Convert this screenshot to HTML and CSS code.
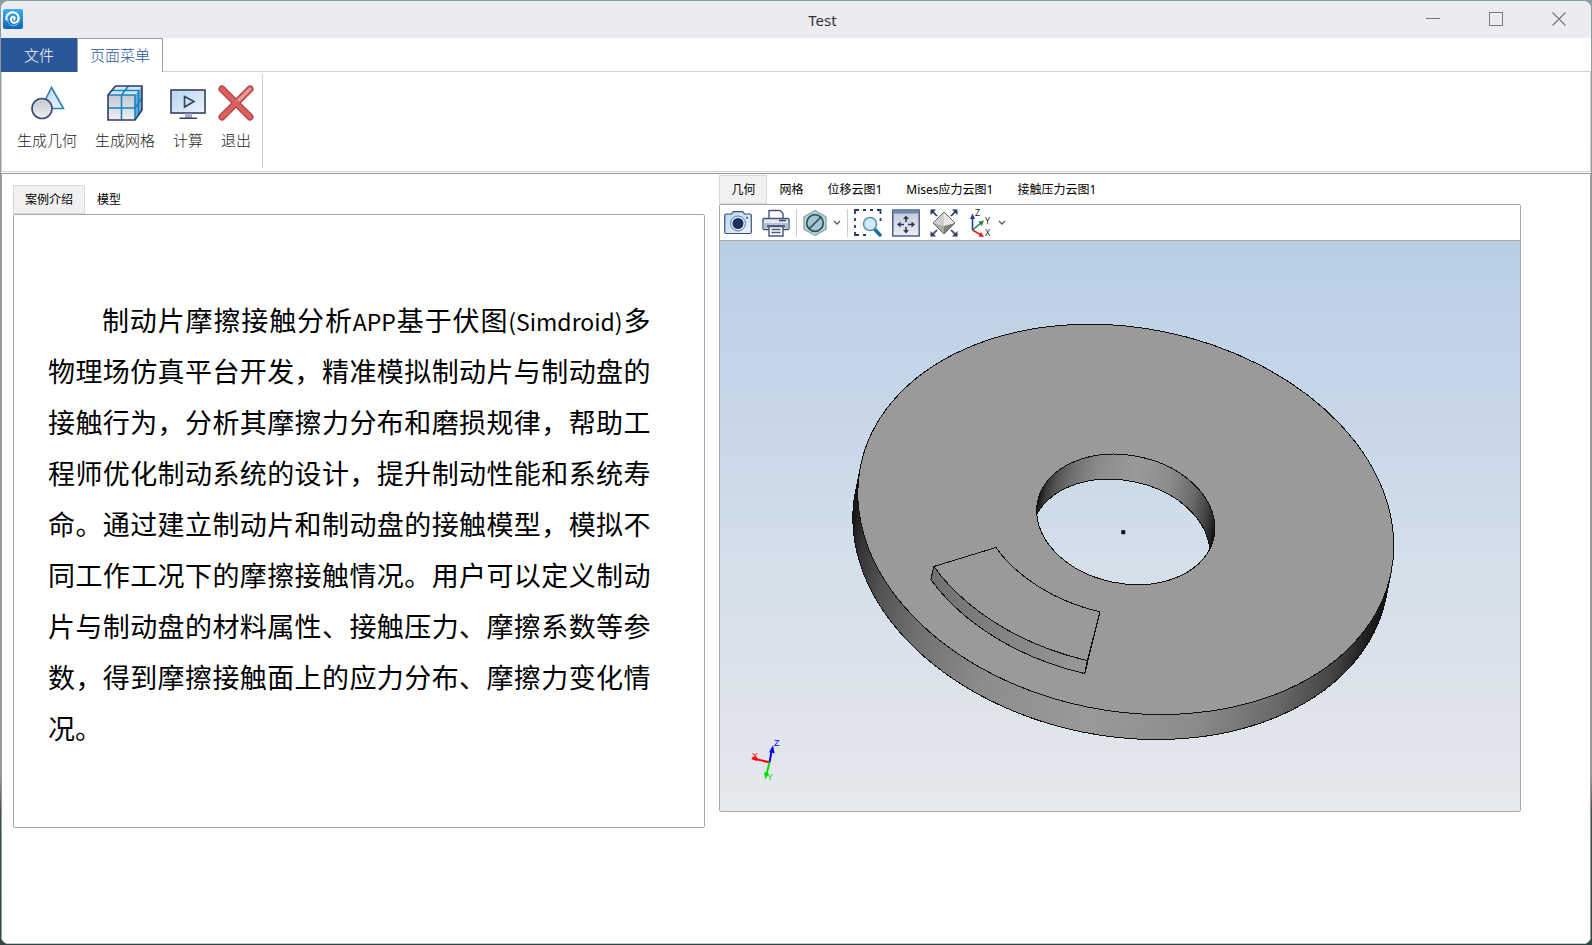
FILE: index.html
```html
<!DOCTYPE html>
<html lang="zh-CN">

<head>
  <meta charset="UTF-8">
  <meta name="viewport" content="width=device-width, initial-scale=1.0">
  <title>Test</title>
  <link rel="stylesheet" href="styles.css">
</head>

<body>
  <div class="window">
    <header class="title-bar">
      <div class="title-left">
        <svg class="app-icon" width="20" height="20" viewBox="0 0 20 20">
          <defs>
            <linearGradient id="appBlue" x1="0" y1="0" x2="0" y2="1">
              <stop offset="0" stop-color="#3fb0f0"/>
              <stop offset="1" stop-color="#1262b4"/>
            </linearGradient>
          </defs>
          <rect width="20" height="20" rx="2" fill="url(#appBlue)"/>
          <path d="M16.500 8C17.500 13 14 16.800 9.800 16.500C6 16.200 4.300 13 5 10" fill="none" stroke="#8ec4ec" stroke-width="1"/>
          <path d="M3.500 10.500C2.800 5.500 7 2.800 11 3.500C15 4.300 16.500 8 15 11.300C13.800 14 10.300 14.500 8.500 12.500C7 10.500 8 8 10 7.800C11.800 7.800 12.300 9.800 11 10.600" fill="none" stroke="#fff" stroke-width="2" stroke-linecap="round"/>
        </svg>
      </div>
      <h1 class="title">Test</h1>
      <div class="window-buttons">
        <button type="button" aria-label="最小化">
          <svg width="14" height="14" viewBox="0 0 14 14"><path d="M0 6.500H14" stroke="#777" fill="none"/></svg>
        </button>
        <button type="button" aria-label="最大化">
          <svg width="14" height="14" viewBox="0 0 14 14"><rect x=".5" y=".5" width="13" height="13" stroke="#777" fill="none"/></svg>
        </button>
        <button type="button" aria-label="关闭">
          <svg width="14" height="14" viewBox="0 0 14 14"><path d="M.5.5l13 13M13.500.5l-13 13" stroke="#777" stroke-width="1.200" fill="none"/></svg>
        </button>
      </div>
    </header>

    <nav class="menu-tabs">
      <button type="button" class="file-tab">文件</button>
      <button type="button" class="page-tab">页面菜单</button>
    </nav>

    <div class="ribbon">
      <div class="ribbon-group">
        <button type="button">
          <svg width="36" height="36" viewBox="0 0 36 36">
            <defs>
              <linearGradient id="lightBlue" x1="0" y1="0" x2="1" y2="1">
                <stop offset="0" stop-color="#b5d4f0"/>
                <stop offset="1" stop-color="#eff6fc"/>
              </linearGradient>
              <linearGradient id="silver" x1="0" y1="0" x2="0" y2="1">
                <stop offset="0" stop-color="#c3c8d2"/>
                <stop offset="1" stop-color="#eeeff2"/>
              </linearGradient>
            </defs>
            <path d="M22.500 2.500L34.500 23.500H12Z" fill="url(#lightBlue)" stroke="#2b83bd" stroke-width="1.600"/>
            <circle cx="13" cy="23.500" r="10" fill="url(#silver)" stroke="#3c4a70" stroke-width="1.600"/>
          </svg>
          <span>生成几何</span>
        </button>
        <button type="button">
          <svg width="36" height="36" viewBox="0 0 36 36">
            <path d="M1 10L8.500 1H35L28 10Z" fill="#d3e8f7"/>
            <path d="M1 10H28V35H1Z" fill="url(#silver)"/>
            <path d="M28 10L35 1V25L28 35Z" fill="#70acd8"/>
            <path d="M1 23H28L35 13M14.500 35V10L21.500 1M4.500 5.500H31.500V30M1 10H28V35" fill="none" stroke="#1683c5" stroke-width="1.600"/>
            <path d="M1 10L8.500 1H35V25L28 35H1Z" fill="none" stroke="#303b61" stroke-width="1.600"/>
          </svg>
          <span>生成网格</span>
        </button>
        <button type="button">
          <svg width="36" height="36" viewBox="0 0 36 36">
            <rect x="1" y="5" width="34" height="23" fill="url(#lightBlue)" stroke="#344064" stroke-width="1.600"/>
            <path d="M14.500 11.500L24 16.500L14.500 22Z" fill="#cfe2f4" stroke="#344064" stroke-width="1.600"/>
            <path d="M15 28.500H22V33H15Z" fill="#a9afbd"/>
            <path d="M9.500 33.200H27" stroke="#344064" stroke-width="1.600"/>
          </svg>
          <span>计算</span>
        </button>
        <button type="button">
          <svg width="36" height="36" viewBox="0 0 36 36">
            <path d="M4 4L32 32M32 4L4 32" stroke="#ac3739" stroke-width="7" stroke-linecap="round"/>
            <path d="M4 4L32 32M32 4L4 32" stroke="#d95f60" stroke-width="5" stroke-linecap="round"/>
            <path d="M21 15L32 4" stroke="#e79a9a" stroke-width="3" stroke-linecap="round"/>
          </svg>
          <span>退出</span>
        </button>
      </div>
    </div>

    <main class="workspace">
      <section class="intro">
        <div class="tabs" role="tablist">
          <button type="button" role="tab" aria-selected="true">案例介绍</button>
          <button type="button" role="tab" aria-selected="false">模型</button>
        </div>
        <article class="intro-panel">
          <p>制动片摩擦接触分析<span class="latin">APP</span>基于伏图<span class="latin">(Simdroid)</span>多物理场仿真平台开发，精准模拟制动片与制动盘的接触行为，分析其摩擦力分布和磨损规律，帮助工程师优化制动系统的设计，提升制动性能和系统寿命。通过建立制动片和制动盘的接触模型，模拟不同工作工况下的摩擦接触情况。用户可以定义制动片与制动盘的材料属性、接触压力、摩擦系数等参数，得到摩擦接触面上的应力分布、摩擦力变化情况。</p>
        </article>
      </section>

      <section class="viewer">
        <div class="tabs" role="tablist">
          <button type="button" role="tab" aria-selected="true">几何</button>
          <button type="button" role="tab" aria-selected="false">网格</button>
          <button type="button" role="tab" aria-selected="false">位移云图1</button>
          <button type="button" role="tab" aria-selected="false">Mises应力云图1</button>
          <button type="button" role="tab" aria-selected="false">接触压力云图1</button>
        </div>
        <div class="viewer-panel">
          <div class="toolbar">
            <button type="button" aria-label="截图">
              <svg width="28" height="28" viewBox="0 0 28 28">
                <path d="M.7 6.500Q.7 5 2.200 5H7.500L9.500 2.700H18.500L20.500 5H25.800Q27.300 5 27.300 6.500V23Q27.300 24.500 25.800 24.500H2.200Q.7 24.500 .7 23Z" fill="url(#lightBlue)" stroke="#3f4f78" stroke-width="1.200"/>
                <circle cx="14" cy="14.500" r="7.500" fill="#e3edf7" stroke="#60779c"/>
                <circle cx="14" cy="14.500" r="5.500" fill="#1b305f"/>
                <circle cx="23" cy="8.800" r="1" fill="#34466f"/>
              </svg>
            </button>
            <button type="button" aria-label="打印">
              <svg width="28" height="28" viewBox="0 0 28 28">
                <path d="M7 10V1.500H18L21 4.500V10" fill="#fff" stroke="#46557c" stroke-width="1.400"/>
                <rect x="1" y="9.500" width="26" height="11" rx="1" fill="#e4e7ef" stroke="#46557c" stroke-width="1.400"/>
                <path d="M1.500 14H26.500V20H1.500Z" fill="#b9c0d2"/>
                <path d="M17 11.500H24M5 17H23" stroke="#34466f" stroke-width="1.600"/>
                <path d="M7 17.500H21V27H7Z" fill="#fff" stroke="#46557c" stroke-width="1.400"/>
                <path d="M9.500 20.500H18.500M9.500 23.500H18.500" stroke="#46557c" stroke-width="1.600"/>
              </svg>
            </button>
            <span class="divider"></span>
            <button type="button" class="with-arrow" aria-label="显示模式">
              <svg width="24" height="28" viewBox="0 0 24 28">
                <path d="M12 1.500L23 8V20L12 26.500L1 20V8Z" fill="#c3d3d7" stroke="#8aa6af" stroke-width="1.400"/>
                <circle cx="12" cy="14" r="8.300" fill="#a6c3cf" stroke="#27555f" stroke-width="1.700"/>
                <path d="M6.500 19.500L17.500 8.500" stroke="#27555f" stroke-width="1.700"/>
              </svg>
              <svg class="arrow" width="8" height="6" viewBox="0 0 8 6"><path d="M1 1L4 4L7 1" fill="none" stroke="#44636b" stroke-width="1.300"/></svg>
            </button>
            <span class="divider"></span>
            <button type="button" aria-label="框选缩放">
              <svg width="28" height="28" viewBox="0 0 28 28">
                <path d="M1 5V1H5M9 1H12M16 1H19M23 1H26.500V5M26.500 9V12M1 9V12M1 16V19M1 23V26H5M9 26H12" fill="none" stroke="#263a69" stroke-width="1.800"/>
                <path d="M20.500 20L26 26" stroke="#146da9" stroke-width="3.400" stroke-linecap="round"/>
                <circle cx="16" cy="15" r="6.500" fill="#d4e9f7" stroke="#5e93b9" stroke-width="1.600"/>
              </svg>
            </button>
            <button type="button" aria-label="平移">
              <svg width="28" height="28" viewBox="0 0 28 28">
                <rect x=".8" y="1" width="26.400" height="26" fill="url(#silver)" stroke="#3d5580" stroke-width="1.400"/>
                <path d="M1 1H27V4.500H1Z" fill="#6888ae"/>
                <path d="M14 13V9M14 18V22M12 15.500H8M16 15.500H20" stroke="#263a69" stroke-width="1.600"/>
                <path d="M14 6.500L17 10H11ZM14 24.500L17 21H11ZM5 15.500L8.500 12.500V18.500ZM23 15.500L19.500 12.500V18.500Z" fill="#263a69"/>
              </svg>
            </button>
            <button type="button" aria-label="适应窗口">
              <svg width="28" height="28" viewBox="0 0 28 28">
                <path d="M14 3L25 14L14 25L3 14Z" fill="#e6e6e6"/>
                <path d="M14 3V17L3 14Z" fill="#d0d0d0"/>
                <path d="M3 14L14 17V25Z" fill="#aaa"/>
                <path d="M25 14L14 17V25Z" fill="#808080"/>
                <path d="M14 3L25 14L14 25L3 14Z" fill="none" stroke="#666"/>
                <path d="M7 7L2 2M21 7L26 2M7 21L2 26M21 21L26 26" stroke="#263a69" stroke-width="1.700"/>
                <path d="M.5.5H6L.5 6ZM27.500.5H22L27.500 6ZM.5 27.500H6L.5 22ZM27.500 27.500H22L27.500 22Z" fill="#263a69"/>
              </svg>
            </button>
            <button type="button" class="with-arrow" aria-label="视图方向">
              <svg width="24" height="34" viewBox="0 0 24 34">
                <path d="M4.500 24V10" stroke="#263f93" stroke-width="1.600"/>
                <path d="M4.500 7.500L7 13H2Z" fill="#263f93"/>
                <path d="M4.500 24L13 17" stroke="#208544" stroke-width="1.600"/>
                <path d="M16 14.500L13.800 20L10.300 15.800Z" fill="#208544"/>
                <path d="M4.500 24L13 29" stroke="#e11c22" stroke-width="1.600"/>
                <path d="M16 31L10.500 30.500L13 26Z" fill="#e11c22"/>
                <text class="axis-name" x="7" y="10">Z</text>
                <text class="axis-name" x="17" y="18">Y</text>
                <text class="axis-name" x="17" y="30">X</text>
              </svg>
              <svg class="arrow" width="8" height="6" viewBox="0 0 8 6"><path d="M1 1L4 4L7 1" fill="none" stroke="#44636b" stroke-width="1.300"/></svg>
            </button>
          </div>

          <svg class="scene" viewBox="720 241 799 570">
            <defs>
              <linearGradient id="side" x1="0" x2="1">
                <stop offset="0" stop-color="#111"/>
                <stop offset=".03" stop-color="#343434"/>
                <stop offset=".08" stop-color="#535353"/>
                <stop offset=".16" stop-color="#707070"/>
                <stop offset=".3" stop-color="#8c8c8c"/>
                <stop offset=".5" stop-color="#9a9a9a"/>
                <stop offset=".7" stop-color="#8c8c8c"/>
                <stop offset=".84" stop-color="#6a6a6a"/>
                <stop offset=".93" stop-color="#444"/>
                <stop offset="1" stop-color="#111"/>
              </linearGradient>
              <linearGradient id="padSide" x1="0" x2="1">
                <stop offset="0" stop-color="#707070"/>
                <stop offset="1" stop-color="#999"/>
              </linearGradient>
              <clipPath id="hole"><ellipse rx="90" ry="64"/></clipPath>
            </defs>

            <!-- brake disc -->
            <g class="edge" transform="translate(1125.500 519.200) rotate(11.300)">
              <path d="M-270.400 0A270.400 191.400 0 0 0 270.400 0V25.500A270.400 191.400 0 0 1 -270.400 25.500Z" fill="url(#side)"/>
              <path d="M-270.400 0A270.400 191.400 0 1 1 270.400 0A270.400 191.400 0 1 1 -270.400 0ZM-90 0A90 64 0 1 0 90 0A90 64 0 1 0 -90 0Z" fill="#9a9a9a" fill-rule="evenodd"/>
              <g clip-path="url(#hole)">
                <path d="M-90 0A90 64 0 0 1 90 0V25.500A90 64 0 0 0 -90 25.500Z" fill="url(#side)"/>
              </g>
              <ellipse rx="90" ry="64" fill="none"/>
            </g>

            <!-- brake pad -->
            <g class="edge">
              <path d="M933.700 566.300L930.700 579.300A225 159.300 11.300 0 0 1084.500 673.300L1087 660.300A225 159.300 11.300 0 1 933.700 566.300Z" fill="url(#padSide)"/>
              <path d="M933.700 566.300L995.700 547.300A153 108.500 11.300 0 0 1099.700 611.700L1087 660.300A225 159.300 11.300 0 1 933.700 566.300Z" fill="#9a9a9a"/>
              <path d="M1084.500 673.300L1099.700 611.700"/>
            </g>
            <rect x="1121" y="530" width="4" height="4" fill="#111"/>

            <!-- axis triad -->
            <g class="triad">
              <path d="M769.500 762L772 748" stroke="#00f"/>
              <path d="M773 745L769 752L774.500 753Z" fill="#00f"/>
              <path d="M769.500 762L752 758" stroke="red"/>
              <path d="M751 758L757 756.500L756.500 761Z" fill="red"/>
              <path d="M769.500 762L766 776" stroke="#00dc00"/>
              <path d="M765 779L764 772L769 773.500Z" fill="#00dc00"/>
              <text x="774" y="746" fill="#00f">Z</text>
              <text x="752" y="759" fill="red">X</text>
              <text x="767" y="780" fill="#00dc00">Y</text>
            </g>
          </svg>
        </div>
      </section>
    </main>
  </div>
</body>

</html>
```
FILE: styles.css
```css
* {
  box-sizing: border-box;
}

body {
  margin: 0;
  min-height: 100vh;
  display: flex;
  padding: 1px;
  background: linear-gradient(#8b9da2, #8f9a9c 20%, #a09497 35%, #a09497 82%, #3c4f4c 86%, #2f4a44);
  font-family: "Noto Sans CJK SC", sans-serif;
  color: #000;
}

button {
  border: none;
  background: none;
  padding: 0;
  margin: 0;
  font-family: inherit;
  color: inherit;
}

svg {
  display: block;
}

.window {
  flex: 1;
  display: flex;
  flex-direction: column;
  background: #fff;
  border-radius: 8px;
  overflow: hidden;
}

/* title bar */
.title-bar {
  display: flex;
  align-items: flex-start;
  height: 37px;
  background: #ebecef;
}

.title-left {
  width: 243px;
  padding: 8px 2px;
}

.title {
  flex: 1;
  margin: 0;
  padding: 9px 0;
  font-family: "Noto Sans", sans-serif;
  font-size: 15px;
  font-weight: 400;
  line-height: 20px;
  text-align: center;
  color: #333;
}

.window-buttons {
  display: flex;
  padding-right: 1px;
}

.window-buttons button {
  width: 63px;
  height: 36px;
  display: flex;
  align-items: center;
  justify-content: center;
}

/* menu */
.menu-tabs {
  display: flex;
  height: 34px;
  border-bottom: 1px solid #d2d2d2;
}

.menu-tabs button {
  height: 34px;
  padding-bottom: 2px;
  font-size: 15px;
  font-weight: 300;
}

.file-tab {
  width: 76px;
  background: #2a579a;
  color: #fff;
}

.menu-tabs .page-tab {
  padding: 0 12px 2px;
  border: 1px solid #9d9d9d;
  border-bottom: none;
  background: #fff;
  color: #2a579a;
}

.ribbon {
  height: 100px;
  padding: 2px 0 4px;
  border: 1px solid #d2d2d2;
  border-top: none;
}

.ribbon-group {
  display: inline-flex;
  height: 94px;
  padding: 11px 2px 0 6px;
  border-right: 1px solid #d2d2d2;
}

.ribbon-group button {
  display: flex;
  flex-direction: column;
  align-items: center;
  gap: 8px;
  padding: 0 9px;
  font-size: 15px;
  font-weight: 300;
  line-height: 22px;
  color: #222;
}

/* short labels are narrower than their icon */
.ribbon-group svg {
  margin: 0 -3px;
}

/* work area */
.workspace {
  flex: 1;
  display: grid;
  grid-template-columns: 692fr 801fr;
  gap: 14px;
  align-items: start;
  margin-top: 1px;
  padding: 1px 69px 16px 11px;
  border: 1px solid #999;
  border-bottom-color: #ccc;
}

.intro {
  padding-top: 10px;
}

.tabs {
  display: flex;
}

.tabs button {
  height: 29px;
  padding: 0 11px;
  border: 1px solid transparent;
  font-family: "Noto Sans", "Noto Sans CJK SC", sans-serif;
  font-size: 12px;
  line-height: 18px;
}

.tabs button[aria-selected="true"] {
  background: #f1f1f1;
  border-color: #d9d9d9;
}

.intro-panel {
  padding: 79px 54px 74px 34px;
  border: 1px solid #a8a8a8;
  border-radius: 2px;
}

.intro-panel p {
  margin: 0;
  font-size: 27px;
  line-height: 51px;
  text-indent: 2em;
  text-align: justify;
}

.latin {
  font-size: 23px;
  line-height: 1;
}

.viewer-panel {
  border: 1px solid #a8a8a8;
  border-radius: 2px;
}

.toolbar {
  display: flex;
  align-items: center;
  gap: 10px;
  height: 36px;
  padding: 0 4px;
  border-bottom: 1px solid #a8a8a8;
}

.divider {
  width: 1px;
  height: 28px;
  margin: 0 -4px;
  background: #ccc;
}

.with-arrow {
  display: flex;
  align-items: center;
  gap: 6px;
}

.axis-name {
  font-family: "Open Sans", sans-serif;
  font-size: 9px;
  fill: #111;
}

.scene {
  width: 100%;
  height: auto;
  background: linear-gradient(#b9cee6, #d3dfea 55%, #dce2eb 75%, #e6e8ec);
}

.edge {
  fill: none;
  stroke: #111;
  stroke-width: 1;
  shape-rendering: crispEdges;
}

.triad {
  stroke-width: 2;
}

.triad text {
  font-family: "Liberation Sans", sans-serif;
  font-size: 9px;
}
```
